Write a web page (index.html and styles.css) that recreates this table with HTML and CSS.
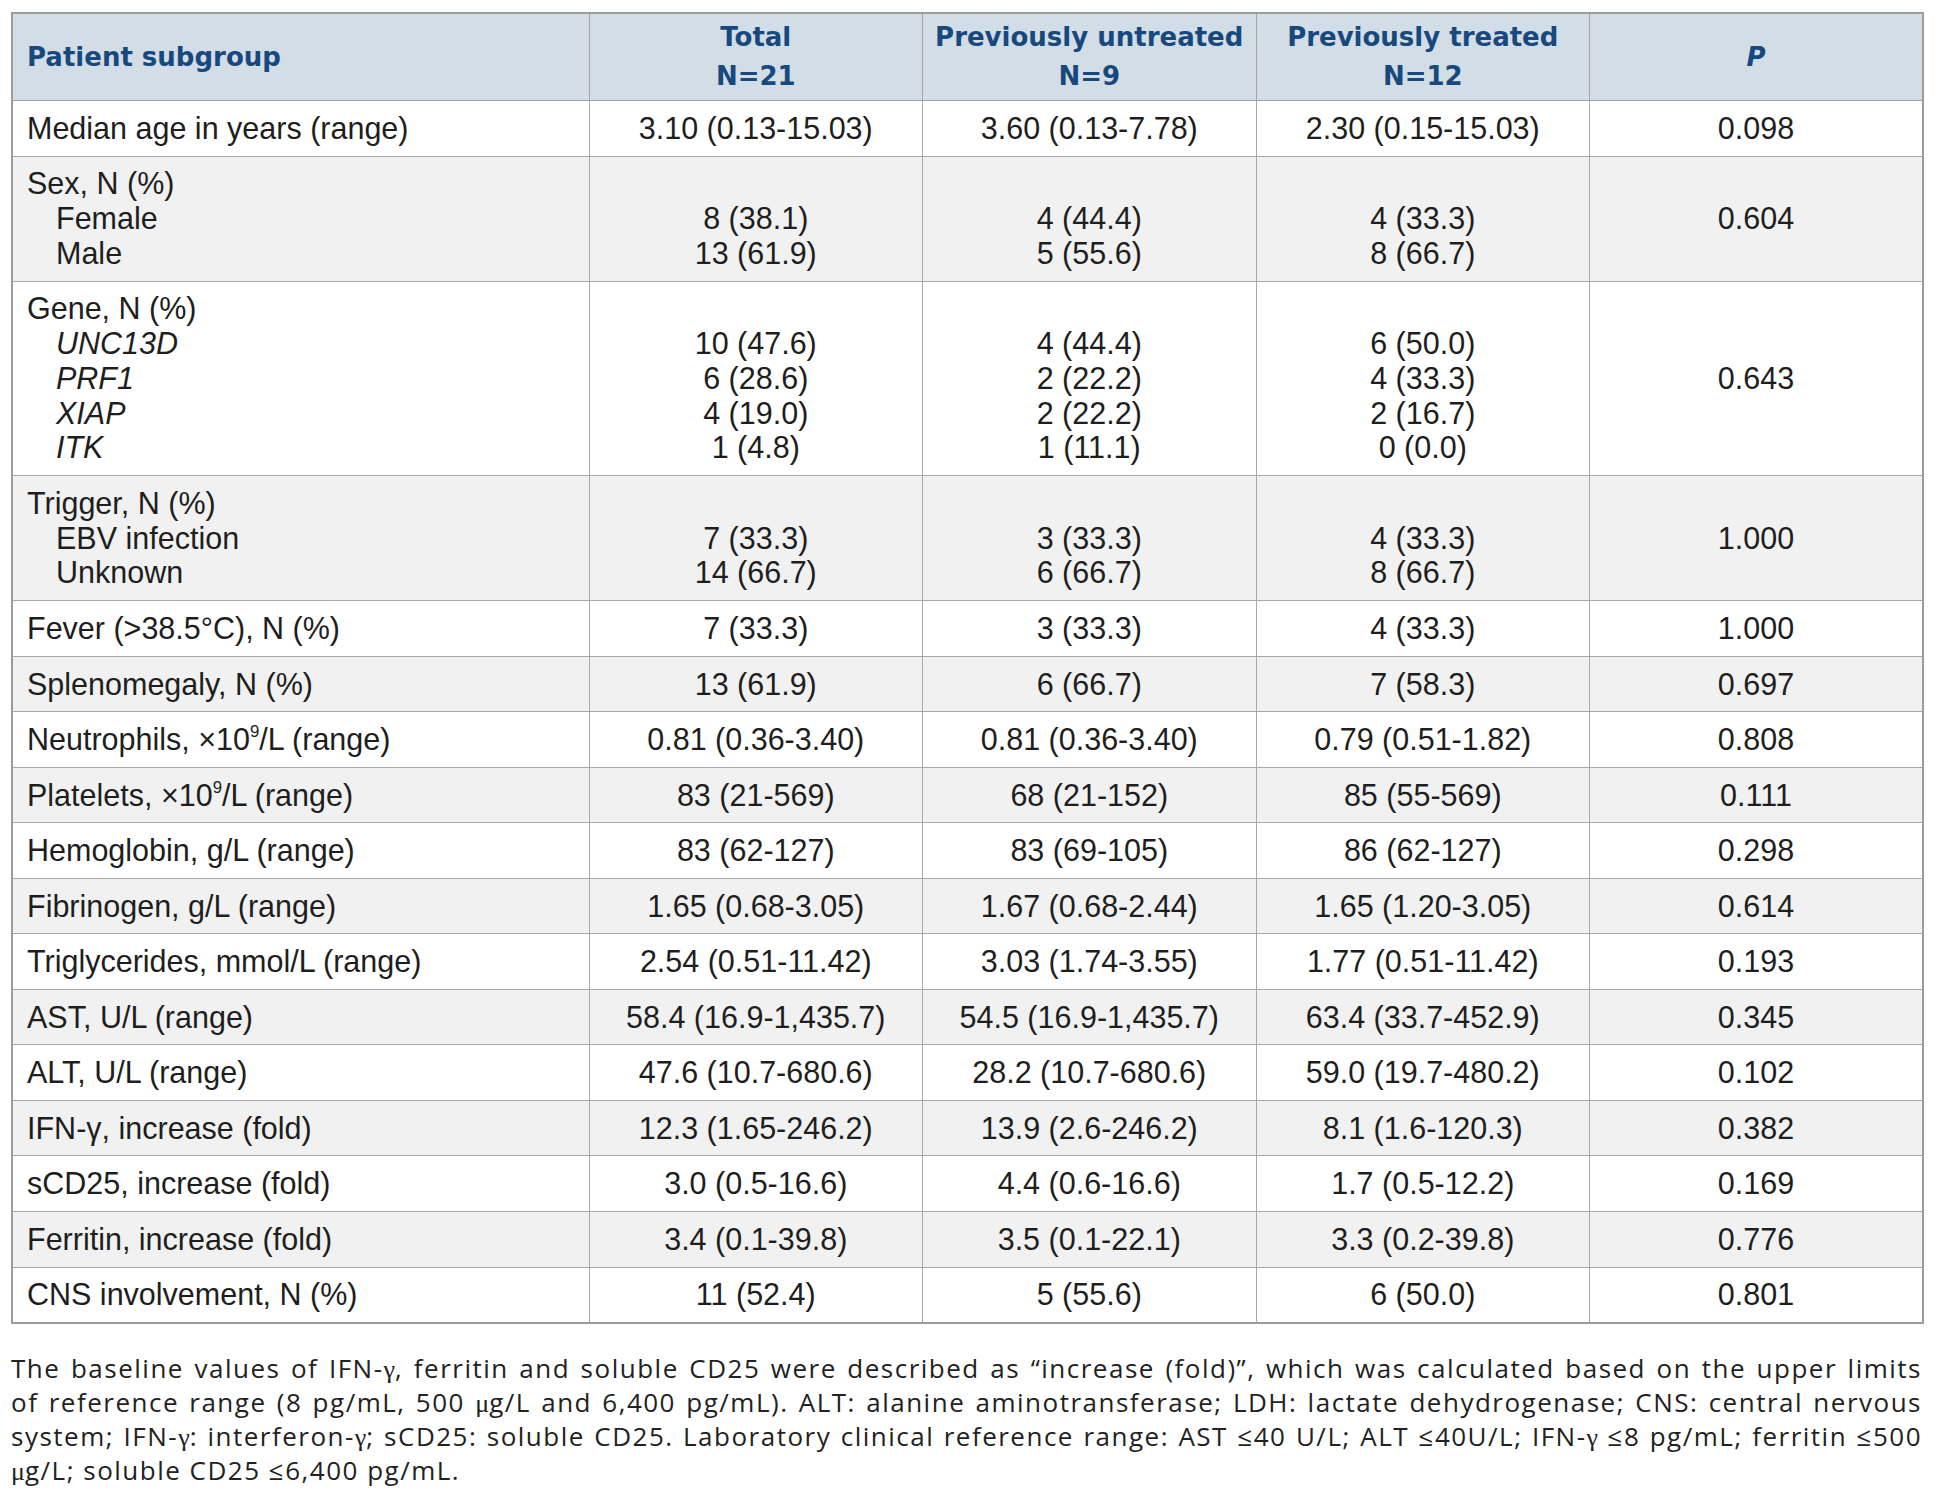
FILE: index.html
```html
<!DOCTYPE html>
<html lang="en">
<head>
<meta charset="utf-8">
<title>Patient characteristics</title>
<link rel="stylesheet" href="styles.css">
</head>
<body>
<div class="page">
<table class="data">
  <colgroup>
    <col class="c-label">
    <col class="c-val">
    <col class="c-val">
    <col class="c-val">
    <col class="c-val">
  </colgroup>
  <thead>
    <tr>
      <th class="h-label">Patient subgroup</th>
      <th>Total<br>N=21</th>
      <th>Previously untreated<br>N=9</th>
      <th>Previously treated<br>N=12</th>
      <th><i>P</i></th>
    </tr>
  </thead>
  <tbody>
    <tr>
      <td class="label">Median age in years (range)</td>
      <td>3.10 (0.13-15.03)</td><td>3.60 (0.13-7.78)</td><td>2.30 (0.15-15.03)</td><td>0.098</td>
    </tr>
    <tr class="alt">
      <td class="label"><div>Sex, N (%)</div><div class="sub">Female</div><div class="sub">Male</div></td>
      <td><div>&nbsp;</div><div>8 (38.1)</div><div>13 (61.9)</div></td>
      <td><div>&nbsp;</div><div>4 (44.4)</div><div>5 (55.6)</div></td>
      <td><div>&nbsp;</div><div>4 (33.3)</div><div>8 (66.7)</div></td>
      <td>0.604</td>
    </tr>
    <tr>
      <td class="label"><div>Gene, N (%)</div><div class="sub"><i>UNC13D</i></div><div class="sub"><i>PRF1</i></div><div class="sub"><i>XIAP</i></div><div class="sub"><i>ITK</i></div></td>
      <td><div>&nbsp;</div><div>10 (47.6)</div><div>6 (28.6)</div><div>4 (19.0)</div><div>1 (4.8)</div></td>
      <td><div>&nbsp;</div><div>4 (44.4)</div><div>2 (22.2)</div><div>2 (22.2)</div><div>1 (11.1)</div></td>
      <td><div>&nbsp;</div><div>6 (50.0)</div><div>4 (33.3)</div><div>2 (16.7)</div><div>0 (0.0)</div></td>
      <td>0.643</td>
    </tr>
    <tr class="alt">
      <td class="label"><div>Trigger, N (%)</div><div class="sub">EBV infection</div><div class="sub">Unknown</div></td>
      <td><div>&nbsp;</div><div>7 (33.3)</div><div>14 (66.7)</div></td>
      <td><div>&nbsp;</div><div>3 (33.3)</div><div>6 (66.7)</div></td>
      <td><div>&nbsp;</div><div>4 (33.3)</div><div>8 (66.7)</div></td>
      <td>1.000</td>
    </tr>
    <tr>
      <td class="label">Fever (&gt;38.5°C), N (%)</td>
      <td>7 (33.3)</td><td>3 (33.3)</td><td>4 (33.3)</td><td>1.000</td>
    </tr>
    <tr class="alt">
      <td class="label">Splenomegaly, N (%)</td>
      <td>13 (61.9)</td><td>6 (66.7)</td><td>7 (58.3)</td><td>0.697</td>
    </tr>
    <tr>
      <td class="label">Neutrophils, ×10<sup>9</sup>/L (range)</td>
      <td>0.81 (0.36-3.40)</td><td>0.81 (0.36-3.40)</td><td>0.79 (0.51-1.82)</td><td>0.808</td>
    </tr>
    <tr class="alt">
      <td class="label">Platelets, ×10<sup>9</sup>/L (range)</td>
      <td>83 (21-569)</td><td>68 (21-152)</td><td>85 (55-569)</td><td>0.111</td>
    </tr>
    <tr>
      <td class="label">Hemoglobin, g/L (range)</td>
      <td>83 (62-127)</td><td>83 (69-105)</td><td>86 (62-127)</td><td>0.298</td>
    </tr>
    <tr class="alt">
      <td class="label">Fibrinogen, g/L (range)</td>
      <td>1.65 (0.68-3.05)</td><td>1.67 (0.68-2.44)</td><td>1.65 (1.20-3.05)</td><td>0.614</td>
    </tr>
    <tr>
      <td class="label">Triglycerides, mmol/L (range)</td>
      <td>2.54 (0.51-11.42)</td><td>3.03 (1.74-3.55)</td><td>1.77 (0.51-11.42)</td><td>0.193</td>
    </tr>
    <tr class="alt">
      <td class="label">AST, U/L (range)</td>
      <td>58.4 (16.9-1,435.7)</td><td>54.5 (16.9-1,435.7)</td><td>63.4 (33.7-452.9)</td><td>0.345</td>
    </tr>
    <tr>
      <td class="label">ALT, U/L (range)</td>
      <td>47.6 (10.7-680.6)</td><td>28.2 (10.7-680.6)</td><td>59.0 (19.7-480.2)</td><td>0.102</td>
    </tr>
    <tr class="alt">
      <td class="label">IFN-γ, increase (fold)</td>
      <td>12.3 (1.65-246.2)</td><td>13.9 (2.6-246.2)</td><td>8.1 (1.6-120.3)</td><td>0.382</td>
    </tr>
    <tr>
      <td class="label">sCD25, increase (fold)</td>
      <td>3.0 (0.5-16.6)</td><td>4.4 (0.6-16.6)</td><td>1.7 (0.5-12.2)</td><td>0.169</td>
    </tr>
    <tr class="alt">
      <td class="label">Ferritin, increase (fold)</td>
      <td>3.4 (0.1-39.8)</td><td>3.5 (0.1-22.1)</td><td>3.3 (0.2-39.8)</td><td>0.776</td>
    </tr>
    <tr>
      <td class="label">CNS involvement, N (%)</td>
      <td>11 (52.4)</td><td>5 (55.6)</td><td>6 (50.0)</td><td>0.801</td>
    </tr>
  </tbody>
</table>
<p class="note">The baseline values of IFN-<span class="greek">γ</span>, ferritin and soluble CD25 were described as “increase (fold)”, which was calculated based on the upper limits of&nbsp;reference range (8 pg/mL, 500 <span class="greek">μ</span>g/L and 6,400 pg/mL). ALT: alanine aminotransferase; LDH: lactate dehydrogenase; CNS: central nervous system; IFN-<span class="greek">γ</span>: interferon-<span class="greek">γ</span>; sCD25: soluble CD25. Laboratory clinical reference range: AST ≤40 U/L; ALT ≤40U/L; IFN-<span class="greek">γ</span> ≤8 pg/mL; ferritin ≤500 <span class="greek">μ</span>g/L; soluble CD25 ≤6,400 pg/mL.</p>
</div>
</body>
</html>
```

FILE: styles.css
```css
html, body {
  margin: 0;
  padding: 0;
  background: #ffffff;
}

.page {
  padding: 12px 13px 0 11px;
}

.data {
  width: 1911px;
  table-layout: fixed;
  border-collapse: collapse;
  border: 2px solid #9c9c9c;
  font-family: "Liberation Sans", Arial, sans-serif;
  font-size: 30.5px;
  color: #1e1e1e;
}

.c-label { width: 577px; }
.c-val { width: 333.5px; }

.data th {
  background: #d3dde6;
  color: #17497f;
  font-family: "DejaVu Sans", sans-serif;
  font-weight: bold;
  font-size: 26px;
  line-height: 39px;
  padding: 4px 2px;
  text-align: center;
  vertical-align: middle;
  border: 1px solid #a3a3a3;
}

.data th.h-label {
  text-align: left;
  padding-left: 14px;
}

.data td {
  border: 1px solid #a8a8a8;
  line-height: 34.75px;
  padding: 9.9px 6px 9.9px 6px;
  text-align: center;
  vertical-align: middle;
}

.data td.label {
  text-align: left;
  padding-left: 14px;
}

.data tr.alt td {
  background: #f1f1f1;
}

.sub {
  padding-left: 29px;
}

sup {
  font-size: 0.55em;
  line-height: 0;
  vertical-align: 0.75em;
}

.note {
  margin: 28px 0 0 0;
  width: 1911px;
  font-family: "Open Sans", sans-serif;
  font-size: 26px;
  line-height: 33px;
  letter-spacing: 1.5px;
  color: #222222;
  text-align: justify;
}

.greek {
  font-family: "Liberation Serif", serif;
  letter-spacing: 0;
}
```
